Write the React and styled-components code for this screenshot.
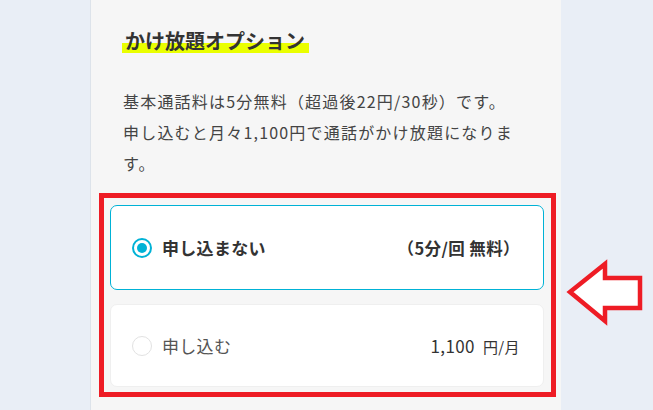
import React from 'react';
import styled, { createGlobalStyle } from 'styled-components';

const GlobalStyle = createGlobalStyle`
  html, body {
    margin: 0;
    padding: 0;
    background: #e9eef6;
    font-family: "Noto Sans CJK JP", "Noto Sans", sans-serif;
  }
`;

const Page = styled.div`
  position: relative;
  display: flex;
  height: 410px;
  overflow: hidden;
  padding-left: 91px;
`;

const Panel = styled.section`
  width: 470px;
  background: #f6f6f6;
  box-shadow: -1px 0 0 #dde3ea;
  padding-top: 29px;
  box-sizing: border-box;
`;

const Title = styled.h2`
  display: inline-block;
  margin: 0 0 0 31px;
  padding: 0 4px 0 3px;
  font-size: 20px;
  line-height: 24px;
  font-weight: 700;
  color: #333;
  background: linear-gradient(transparent 60%, #eaff00 60%);
`;

const Description = styled.p`
  width: 392px;
  margin: 32px 0 0 32px;
  font-size: 16px;
  line-height: 31px;
  letter-spacing: 1.2px;
  color: #444;
`;

const Frame = styled.div`
  display: flex;
  flex-direction: column;
  gap: 14px;
  margin: 14px 5px 0 8px;
  padding: 7px 7px 5px 6px;
  border: 5px solid #ee1c25;
`;

const Option = styled.label`
  display: flex;
  align-items: center;
  height: ${(p) => (p.$selected ? 85 : 83)}px;
  padding: 0 23px 0 21px;
  box-sizing: border-box;
  background: #fff;
  border: 1px solid ${(p) => (p.$selected ? '#00b2d6' : '#efefef')};
  border-radius: 7px;
`;

const Radio = styled.span`
  display: flex;
  align-items: center;
  justify-content: center;
  width: 20px;
  height: 20px;
  box-sizing: border-box;
  border-radius: 50%;
  border: ${(p) => (p.$selected ? '2px solid #00b2d6' : '1px solid #e2e2e2')};

  &::after {
    content: '';
    display: ${(p) => (p.$selected ? 'block' : 'none')};
    width: 10px;
    height: 10px;
    border-radius: 50%;
    background: #00b2d6;
  }
`;

const Label = styled.span`
  margin-left: 10px;
  font-size: 17px;
  font-weight: ${(p) => (p.$selected ? 700 : 400)};
  color: ${(p) => (p.$selected ? '#333' : '#555')};
  letter-spacing: 0.3px;
`;

const Price = styled.span`
  margin-left: auto;
  font-size: 16.5px;
  font-weight: ${(p) => (p.$bold ? 700 : 400)};
  color: #333;
  letter-spacing: 0.4px;
`;

const Amount = styled.span`
  font-size: 17px;
  margin-right: 8px;
`;

const Unit = styled.span`
  font-size: 15px;
`;

const Arrow = styled.svg`
  position: absolute;
  left: 565px;
  top: 259px;
`;

const App = function () {
  return (
    <>
      <GlobalStyle />
      <Page>
        <Panel>
          <Title>かけ放題オプション</Title>
          <Description>
            基本通話料は5分無料（超過後22円/30秒）です。申し込むと月々1,100円で通話がかけ放題になります。
          </Description>
          <Frame>
            <Option $selected>
              <Radio $selected />
              <Label $selected>申し込まない</Label>
              <Price $bold>（5分/回 無料）</Price>
            </Option>
            <Option>
              <Radio />
              <Label>申し込む</Label>
              <Price>
                <Amount>1,100</Amount>
                <Unit>円/月</Unit>
              </Price>
            </Option>
          </Frame>
        </Panel>
      </Page>
      <Arrow width="80" height="68" viewBox="0 0 80 68">
        <polygon
          points="5,33 40,5 40,19 75,19 75,49 40,49 40,62"
          fill="#fff"
          stroke="#ee1c25"
          strokeWidth="4.5"
          strokeLinejoin="miter"
        />
      </Arrow>
    </>
  );
};

export default App;
